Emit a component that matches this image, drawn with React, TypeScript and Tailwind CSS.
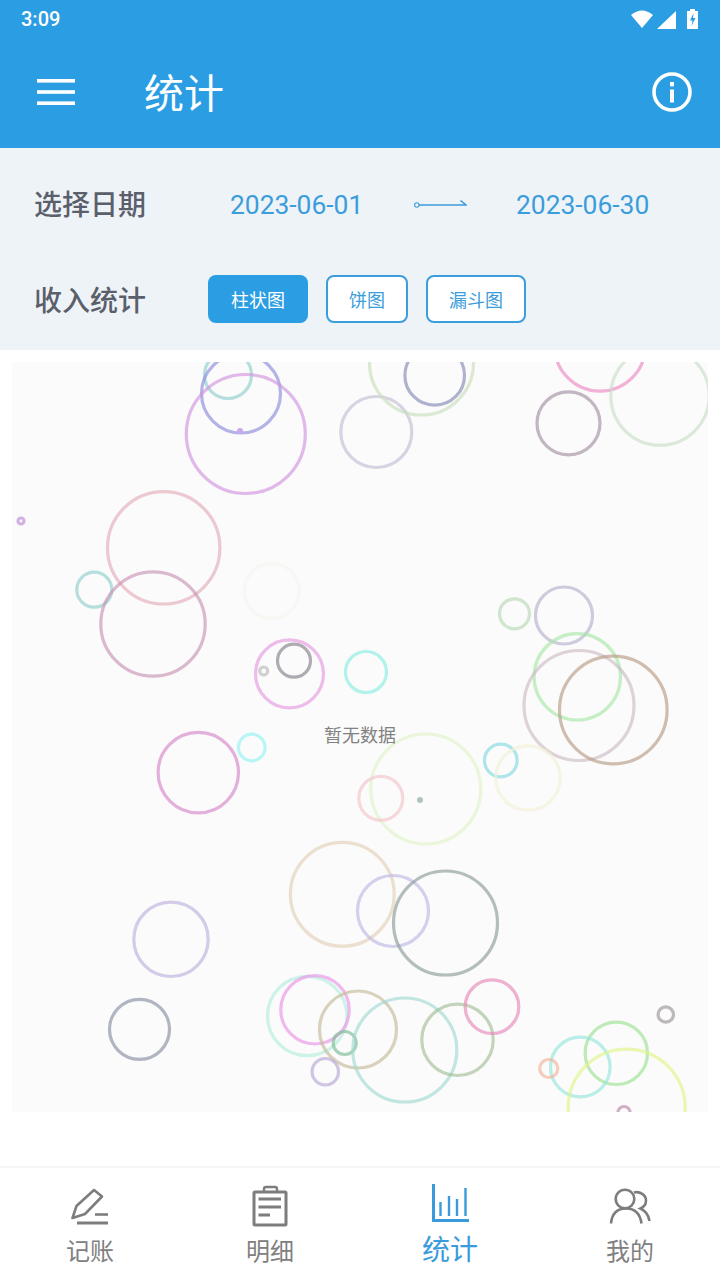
import React from "react";

type C = [number, number, number, string];
// cx, cy, outer radius, colour as seen over the panel (page coordinates)
const circles: C[] = [
  [228, 375, 25, "#b5dfdc"],
  [241, 393.5, 41, "#b3b3e6"],
  [245.8, 434, 61, "#e0b8e8"],
  [21, 521, 4.5, "#d3b0e4"],
  [163.7, 547.8, 57.7, "#ecc8d0"],
  [94.3, 589.7, 19, "#b5dedd"],
  [153, 624, 53.7, "#d9b8cc"],
  [271.7, 591, 29, "#f5f8f4"],
  [289.5, 673.8, 35.5, "#edbbea"],
  [294, 660.7, 18, "#aeabb2"],
  [263.7, 671, 5.5, "#d0d0d0"],
  [366, 672, 22, "#b0f2ea"],
  [376.3, 432, 37, "#d6d4e2"],
  [421.5, 363, 53.5, "#dbe8d2"],
  [434.7, 375.4, 31.3, "#aeb2cc"],
  [600, 345.8, 46.9, "#f1b2d8"],
  [568.5, 423.3, 33, "#c2b6c2"],
  [660, 396, 50.7, "#dbe8da"],
  [514.5, 613.8, 16.5, "#cfe4cc"],
  [564, 615.5, 30, "#cdcbdc"],
  [577.3, 676.8, 44.7, "#c4eec4"],
  [579, 705.5, 56.5, "#dcd2d8"],
  [613.3, 710, 55.3, "#cfbdaf"],
  [198.3, 772.6, 41.7, "#e3aedb"],
  [251.8, 747.5, 14.8, "#b8f5f5"],
  [425.8, 789, 56.5, "#e9f5da"],
  [380.8, 798.3, 23.5, "#f5d8dc"],
  [500.8, 760.5, 17.8, "#ade4ea"],
  [528, 778, 33.7, "#f5f3e2"],
  [342.3, 894.3, 53.4, "#ebdfcf"],
  [393, 911, 37, "#d3cfec"],
  [445.5, 923, 53.5, "#b3bdbb"],
  [171, 939.3, 38.7, "#d3cbe6"],
  [139.5, 1029.3, 31.5, "#b0b5c2"],
  [307.2, 1016, 41.2, "#cdf2e6"],
  [315, 1009.8, 35.7, "#efb8ee"],
  [358, 1029.5, 40, "#d8d2bc"],
  [344.7, 1043, 13, "#a8d2b8"],
  [325.3, 1071.7, 14.7, "#cfc5e2"],
  [404.8, 1050, 53.5, "#c1e4e0"],
  [457.5, 1039.8, 37.2, "#c2d4ba"],
  [492, 1006.7, 28.3, "#eeb0d0"],
  [665.8, 1014.5, 9.2, "#bcb8bc"],
  [616.3, 1053.3, 32.7, "#bdeab8"],
  [580.3, 1067, 31.3, "#b8eee6"],
  [548.8, 1068.5, 10.5, "#f5cdbc"],
  [626.7, 1107.7, 60, "#e9f7b0"],
  [624, 1112.7, 7.7, "#d0b0c8"],
];

// darken the seen colour so that, at 65% alpha over the panel, it comes out right
function base(hex: string) {
  const v = [1, 3, 5].map((i) => parseInt(hex.slice(i, i + 2), 16));
  const c = v.map((x) => Math.max(0, Math.round((x - 0.35 * 251) / 0.65)));
  return `rgb(${c[0]},${c[1]},${c[2]})`;
}

function Bubbles() {
  return (
    <svg viewBox="12 362 696 750" className="absolute inset-0 w-full h-full">
      {circles.map(([x, y, r, col], i) => (
        <circle
          key={i}
          cx={x}
          cy={y}
          r={r - 1.5}
          fill="none"
          stroke={base(col)}
          strokeOpacity={0.65}
          strokeWidth={3.2}
        />
      ))}
      <circle cx={240} cy={431} r={3} fill="#c9a9ee" />
      <circle cx={420} cy={800} r={3} fill="#b0c4ba" />
    </svg>
  );
}

function StatusIcons() {
  return (
    <svg width="70" height="22" viewBox="631 6 70 22">
      <path d="M631 13 Q642 4 653 13 L642 26 Z" fill="#fff" />
      <path d="M676 9 V27 H657 Z" fill="#fff" />
      <path d="M690 7 h5 v2 h3 v18 h-11 v-18 h3 z" fill="#fff" />
      <path d="M693.5 11 L690 18.5 h2.5 L691.5 24 L695.5 16 h-2.5 Z" fill="#2b9de3" />
    </svg>
  );
}

function Menu() {
  return (
    <svg width="38" height="26" viewBox="0 0 38 26">
      <rect x="0" y="0" width="38" height="3.6" fill="#fff" />
      <rect x="0" y="11.2" width="38" height="3.6" fill="#fff" />
      <rect x="0" y="22.4" width="38" height="3.6" fill="#fff" />
    </svg>
  );
}

function Info() {
  return (
    <svg width="40" height="40" viewBox="0 0 40 40">
      <circle cx="20" cy="20" r="18" fill="none" stroke="#fff" strokeWidth="3.6" />
      <rect x="18" y="10" width="4" height="4.4" fill="#fff" />
      <rect x="18" y="17.5" width="4" height="13" fill="#fff" />
    </svg>
  );
}

function Arrow() {
  return (
    <svg width="54" height="12" viewBox="413 200 54 12">
      <circle cx="416.8" cy="206" r="2.2" fill="none" stroke="#3b9ddb" strokeWidth="1.1" />
      <path d="M419 206 H466 L460.5 201.5" fill="none" stroke="#3b9ddb" strokeWidth="1.6" />
    </svg>
  );
}

const gray = "#7d7d7d";

function PenIcon() {
  return (
    <svg width="40" height="38" viewBox="70 1189 40 38" fill="none" stroke={gray} strokeWidth="2.6">
      <path d="M72.5 1219 L76.5 1207 L94 1191 L102 1197.5 L85 1215 Z" strokeLinejoin="round" />
      <path d="M95 1215.5 H108" />
      <path d="M77 1224 H108" strokeWidth="3" />
    </svg>
  );
}

function ClipIcon() {
  return (
    <svg width="36" height="42" viewBox="252 1186 36 42" fill="none" stroke={gray} strokeWidth="3">
      <rect x="254" y="1193" width="32" height="33" rx="1" />
      <path d="M264 1193 V1190 Q264 1188 266 1188 H275 Q277 1188 277 1190 V1193" strokeWidth="2.4" />
      <path d="M258.5 1200 H281 M258.5 1208 H281 M258.5 1216 H270" />
    </svg>
  );
}

function ChartIcon() {
  return (
    <svg width="38" height="40" viewBox="430 1184 38 40" fill="none" stroke="#3a9bdc">
      <path d="M432.5 1185 V1221.5 H468" strokeWidth="3" />
      <path d="M439.5 1203 V1217 M448 1197 V1217 M456 1200 V1217 M464.5 1189 V1217" strokeWidth="2.4" />
    </svg>
  );
}

function UserIcon() {
  return (
    <svg width="42" height="38" viewBox="609 1189 42 38" fill="none" stroke={gray} strokeWidth="2.6">
      <circle cx="625" cy="1200" r="9.3" />
      <path d="M611 1224.5 C612 1214 618 1209.5 626 1209.5 C634 1209.5 640 1214 641.5 1224.5" />
      <path d="M634 1193.5 C640 1192 646 1196 646 1201.5 C646 1205 644 1208 640.5 1209.5 C645 1211.5 648.5 1215.5 649.5 1222" />
    </svg>
  );
}

export default function App() {
  return (
    <div className="w-[720px] h-[1280px] flex flex-col bg-white overflow-hidden font-['Noto_Sans_CJK_SC','Noto_Sans',sans-serif]">
      <header className="h-[148px] bg-[#2b9de3] flex flex-col text-white">
        <div className="h-[38px] pl-[21px] pr-[19px] flex items-center justify-between">
          <span className="font-['Roboto',sans-serif] font-medium text-[20px] leading-none">3:09</span>
          <StatusIcons />
        </div>
        <div className="h-[110px] pl-[37px] pr-[28px] pb-[2px] flex items-center">
          <Menu />
          <h1 className="ml-[69px] pb-[2px] text-[40px] leading-none font-normal flex-1">统计</h1>
          <Info />
        </div>
      </header>

      <section className="h-[202px] bg-[#eef3f8] pl-[34px] flex flex-col">
        <div className="h-[114px] flex items-center">
          <span className="w-[196px] pb-[4px] text-[28px] leading-none font-medium text-[#5b5f6b]">选择日期</span>
          <span className="w-[183px] font-['Roboto',sans-serif] text-[26.4px] leading-none text-[#3b9ddb]">2023-06-01</span>
          <Arrow />
          <span className="ml-[49px] font-['Roboto',sans-serif] text-[26.4px] leading-none text-[#3b9ddb]">2023-06-30</span>
        </div>
        <div className="h-[76px] flex items-center pb-[2px]">
          <span className="w-[174px] text-[28px] leading-none font-medium text-[#5b5f6b]">收入统计</span>
          <div className="flex gap-[18px]">
            <button className="w-[100px] h-[48px] rounded-lg bg-[#2b9de3] text-white text-[18px] leading-none">柱状图</button>
            <button className="w-[82px] h-[48px] rounded-lg border-2 border-[#3b9ddb] bg-white text-[#3b9ddb] text-[18px] leading-none">饼图</button>
            <button className="w-[100px] h-[48px] rounded-lg border-2 border-[#3b9ddb] bg-white text-[#3b9ddb] text-[18px] leading-none">漏斗图</button>
          </div>
        </div>
      </section>

      <main className="flex-1 px-[12px] pt-[12px]">
        <div className="relative h-[750px] bg-[#fbfbfb] overflow-hidden">
          <Bubbles />
          <span className="absolute left-0 right-0 top-[359px] text-center text-[18px] leading-[26px] text-[#828282]">暂无数据</span>
        </div>
      </main>

      <nav className="h-[114px] border-t-2 border-[#f5f5f5] grid grid-cols-4">
        <div className="flex flex-col items-center pt-[20px]">
          <PenIcon />
          <span className="mt-[9px] text-[24px] leading-[30px] text-[#808080]">记账</span>
        </div>
        <div className="flex flex-col items-center pt-[17px]">
          <ClipIcon />
          <span className="mt-[8px] text-[24px] leading-[30px] text-[#808080]">明细</span>
        </div>
        <div className="flex flex-col items-center pt-[15px]">
          <ChartIcon />
          <span className="mt-[8px] text-[28px] leading-[34px] text-[#3a9bdc]">统计</span>
        </div>
        <div className="flex flex-col items-center pt-[20px]">
          <UserIcon />
          <span className="mt-[9px] text-[24px] leading-[30px] text-[#808080]">我的</span>
        </div>
      </nav>
    </div>
  );
}
